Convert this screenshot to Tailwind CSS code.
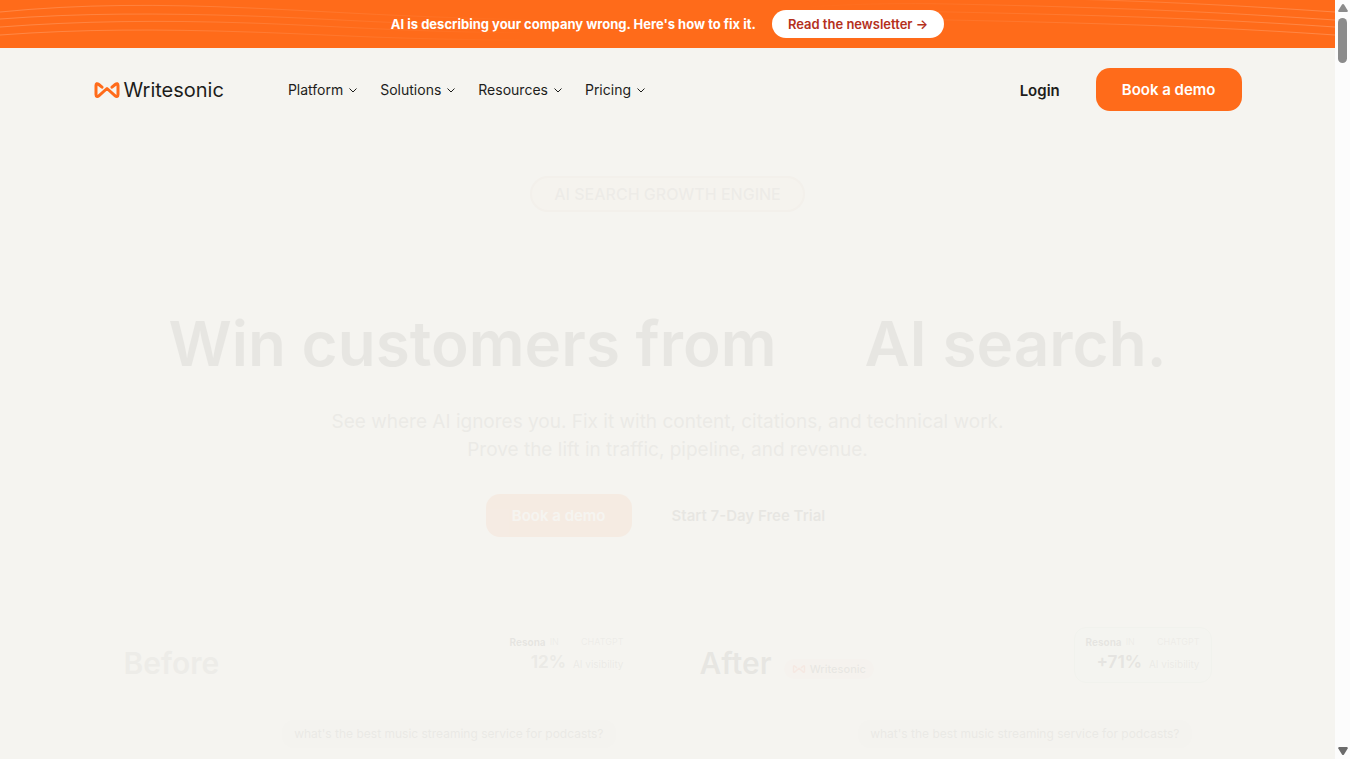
<!DOCTYPE html>
<html lang="en">
<head>
    <meta charset="UTF-8">
    <meta name="viewport" content="width=device-width, initial-scale=1.0">
    <script src="https://cdn.jsdelivr.net/npm/@tailwindcss/browser@4"></script>
    <title>Writesonic</title>
</head>
<body class="flex h-screen overflow-hidden bg-[#f5f4f0] font-['Inter','Liberation_Sans',sans-serif] text-[#1d1d1b]">

    <div class="min-w-0 flex-1 overflow-hidden">

        <!-- Announcement bar -->
        <div class="relative flex h-12 items-center justify-center gap-4 overflow-hidden bg-[#ff6b1a]">
            <svg class="absolute inset-0 h-full w-full" viewBox="0 0 1335 48" preserveAspectRatio="none" fill="none">
                <defs>
                    <linearGradient id="fade" gradientUnits="userSpaceOnUse" x1="0" y1="0" x2="1335" y2="0">
                        <stop offset="0" stop-color="#fff" stop-opacity=".2" />
                        <stop offset=".3" stop-color="#fff" stop-opacity=".06" />
                        <stop offset=".4" stop-color="#fff" stop-opacity="0" />
                        <stop offset=".6" stop-color="#fff" stop-opacity="0" />
                        <stop offset=".72" stop-color="#fff" stop-opacity=".06" />
                        <stop offset="1" stop-color="#fff" stop-opacity=".2" />
                    </linearGradient>
                </defs>
                <g stroke="url(#fade)">
                    <path d="M0 12C80 4 160 4 250 8S400 17 540 20S760-8 950-4S1230 5 1335 12" />
                    <path d="M0 19C80 13 160 13 250 16S400 25 540 26S760 0 950 4S1230 13 1335 20" />
                    <path d="M0 27C80 21 160 20 250 23S400 32 540 33S760 8 950 12S1230 20 1335 27" />
                    <path d="M0 35C80 29 160 29 250 32S400 40 540 40S760 16 950 20S1230 28 1335 35" />
                </g>
            </svg>
            <p class="relative text-[13px] leading-5 font-bold text-white">AI is describing your company wrong. Here's how to fix it.</p>
            <a href="#" class="relative rounded-full bg-white px-4 py-1 text-[13px] leading-5 font-semibold text-[#b5301c]">Read the newsletter →</a>
        </div>

        <!-- Navbar -->
        <header class="mx-auto flex h-[83px] max-w-[1148px] items-center">
            <a href="#" class="flex items-center gap-1">
                <svg class="h-4 w-[26px]" viewBox="0 0 26 16" fill="none" stroke="#ff6b1a" stroke-width="3" stroke-linejoin="round" stroke-linecap="round">
                    <path d="M8 5.200 4.800 2.500C3 1 2 1.600 2 3.500v9C2 14.600 3.400 15 4.800 13.800L13 6.500l8.200 7.300C22.600 15 24 14.600 24 12.500v-9C24 1.600 23 1 21.200 2.500L18 5.200" />
                </svg>
                <span class="text-xl">Writesonic</span>
            </a>
            <nav class="ml-16 flex items-center gap-[21px] text-sm">
                <button type="button" class="flex items-center gap-1">Platform
                    <svg class="h-3 w-3" viewBox="0 0 12 12" fill="none" stroke="currentColor"><path d="M2.500 4.500l3.500 3.500 3.500-3.500" /></svg>
                </button>
                <button type="button" class="flex items-center gap-1">Solutions
                    <svg class="h-3 w-3" viewBox="0 0 12 12" fill="none" stroke="currentColor"><path d="M2.500 4.500l3.500 3.500 3.500-3.500" /></svg>
                </button>
                <button type="button" class="flex items-center gap-1">Resources
                    <svg class="h-3 w-3" viewBox="0 0 12 12" fill="none" stroke="currentColor"><path d="M2.500 4.500l3.500 3.500 3.500-3.500" /></svg>
                </button>
                <button type="button" class="flex items-center gap-1">Pricing
                    <svg class="h-3 w-3" viewBox="0 0 12 12" fill="none" stroke="currentColor"><path d="M2.500 4.500l3.500 3.500 3.500-3.500" /></svg>
                </button>
            </nav>
            <div class="ml-auto flex items-center gap-9">
                <a href="#" class="pt-1 text-[15px] font-semibold">Login</a>
                <button type="button" class="rounded-[14px] bg-[#ff6b1a] px-[26px] py-[10px] text-[15px] leading-[23px] font-semibold text-white">Book a demo</button>
            </div>
        </header>

        <main>
            <!-- Hero, at the start of its fade in -->
            <section class="flex flex-col items-center pt-[45px] text-center opacity-6">
                <p class="rounded-full border-2 border-[#d9b8a0] bg-[#ffe9d5] px-[22px] py-1 text-base font-medium text-[#77706a]">AI SEARCH GROWTH ENGINE</p>
                <h1 class="mt-[88px] flex gap-[88px] text-[62px] leading-[88px] font-semibold whitespace-nowrap">
                    <span>Win customers from</span>
                    <span>AI search.</span>
                </h1>
                <p class="mt-5 text-[19px] leading-7 text-[#555]">See where AI ignores you. Fix it with content, citations, and technical work.<br>Prove the lift in traffic, pipeline, and revenue.</p>
                <div class="mt-[30px] flex items-center gap-4">
                    <button type="button" class="rounded-[14px] bg-[#ff6b1a] px-[26px] py-[10px] text-[15px] leading-[23px] font-semibold text-white">Book a demo</button>
                    <button type="button" class="px-6 py-[10px] text-[15px] leading-[23px] font-semibold">Start 7-Day Free Trial</button>
                </div>
            </section>

            <!-- Before / After comparison -->
            <section class="mx-auto mt-[65px] grid max-w-[1152px] grid-cols-2 opacity-6">
                <div class="px-8 pt-[26px]">
                    <div class="flex h-[54px] items-center">
                        <h2 class="mt-4 text-3xl font-semibold text-[#777]">Before</h2>
                        <div class="ml-auto w-[138px] rounded-xl bg-white px-3 py-2 text-right">
                            <p class="flex items-center gap-1 text-[9px] leading-3 text-[#777]"><b class="text-[10px] text-black">Resona</b> IN <span class="ml-auto">CHATGPT</span></p>
                            <p class="mt-1 text-[10px] leading-5 text-[#555]"><b class="mr-1 text-[17px] leading-5 font-bold">12%</b> AI visibility</p>
                        </div>
                    </div>
                    <div class="mt-[18px] flex h-80 items-start justify-end rounded-t-2xl bg-white/60 py-5 pr-5">
                        <p class="rounded-xl bg-[#e8e6e0] px-3 py-1 text-xs leading-5 text-[#444]">what's the best music streaming service for podcasts?</p>
                    </div>
                </div>
                <div class="rounded-2xl bg-white px-8 pt-[26px]">
                    <div class="flex h-[54px] items-center">
                        <h2 class="mt-4 text-3xl font-semibold">After</h2>
                        <p class="mt-7 ml-3 flex items-center gap-1 rounded-full bg-[#ffdfd2] px-2 text-[11px] leading-5 font-medium">
                            <svg class="h-2 w-[14px]" viewBox="0 0 26 16" fill="none" stroke="#ff3b1a" stroke-width="3" stroke-linejoin="round" stroke-linecap="round">
                                <path d="M8 5.200 4.800 2.500C3 1 2 1.600 2 3.500v9C2 14.600 3.400 15 4.800 13.800L13 6.500l8.200 7.300C22.600 15 24 14.600 24 12.500v-9C24 1.600 23 1 21.200 2.500L18 5.200" />
                            </svg>
                            Writesonic
                        </p>
                        <div class="ml-auto w-[138px] rounded-xl border border-[#b5d5c0] bg-[#f0fff4] px-[11px] py-2 text-right">
                            <p class="flex items-center gap-1 text-[9px] leading-3 text-[#777]"><b class="text-[10px] text-black">Resona</b> IN <span class="ml-auto">CHATGPT</span></p>
                            <p class="mt-1 text-[10px] leading-5 text-[#555]"><b class="mr-1 text-[17px] leading-5 font-bold text-black">+71%</b> AI visibility</p>
                        </div>
                    </div>
                    <div class="mt-[18px] flex h-80 items-start justify-end py-5 pr-5">
                        <p class="rounded-xl bg-[#e8e6e0] px-3 py-1 text-xs leading-5 text-[#444]">what's the best music streaming service for podcasts?</p>
                    </div>
                </div>
            </section>
        </main>
    </div>

    <!-- Scrollbar -->
    <div class="flex w-[15px] shrink-0 flex-col items-center bg-[#fcfcfc] py-1">
        <svg class="h-2 w-[10px]" viewBox="0 0 10 8" fill="#8b8b8b"><path d="M5 0q.6 0 1 .6L9.700 6.400Q10 8 9 8H1Q0 8 .3 6.400L4 .6Q4.400 0 5 0z" /></svg>
        <div class="mt-[6px] h-[45px] w-[9px] rounded-full bg-[#8b8b8b]"></div>
        <svg class="mt-auto h-2 w-[10px] rotate-180" viewBox="0 0 10 8" fill="#6b6b6b"><path d="M5 0q.6 0 1 .6L9.700 6.400Q10 8 9 8H1Q0 8 .3 6.400L4 .6Q4.400 0 5 0z" /></svg>
    </div>

</body>
</html>
